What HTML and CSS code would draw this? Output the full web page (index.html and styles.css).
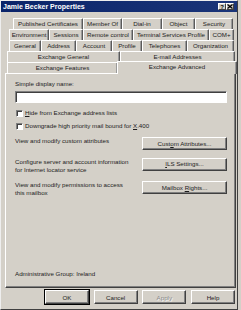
FILE: index.html
```html
<!DOCTYPE html>
<html lang="en">
<head>
    <meta charset="UTF-8">
    <meta name="viewport" content="width=device-width, initial-scale=1.0">
    <title>Jamie Becker Properties</title>
    <link rel="stylesheet" href="styles.css">
</head>
<body>

<div class="window">
    <div class="titlebar">
        <span class="title">Jamie Becker Properties</span>
        <div class="caption-buttons">
            <span class="cbtn">?</span>
            <span class="cbtn">
                <svg width="6" height="5" viewBox="0 0 6 5"><path d="M0.5 0.5 L5.5 4.5 M5.5 0.5 L0.5 4.5" stroke="#000" stroke-width="1.3"/></svg>
            </span>
        </div>
    </div>

    <div class="client">
        <!-- tab rows, top row first -->
        <div class="tabs">
            <div class="tab-row row1">
                <div class="tab">Published Certificates</div>
                <div class="tab">Member Of</div>
                <div class="tab">Dial-in</div>
                <div class="tab">Object</div>
                <div class="tab">Security</div>
            </div>
            <div class="tab-row row2">
                <div class="tab">Environment</div>
                <div class="tab">Sessions</div>
                <div class="tab">Remote control</div>
                <div class="tab">Terminal Services Profile</div>
                <div class="tab">COM+</div>
            </div>
            <div class="tab-row row3">
                <div class="tab">General</div>
                <div class="tab">Address</div>
                <div class="tab">Account</div>
                <div class="tab">Profile</div>
                <div class="tab">Telephones</div>
                <div class="tab">Organization</div>
            </div>
            <div class="tab-row row4">
                <div class="tab">Exchange General</div>
                <div class="tab">E-mail Addresses</div>
            </div>
            <div class="tab-row row5">
                <div class="tab">Exchange Features</div>
                <div class="tab selected">Exchange Advanced</div>
            </div>
        </div>

        <div class="page">
            <div class="field-label">Simple display name:</div>
            <div class="textbox"></div>

            <div class="check first"><span class="box"></span><span><u>H</u>ide from Exchange address lists</span></div>
            <div class="check"><span class="box"></span><span>Downgrade high priority mail bound for <u>X</u>.400</span></div>

            <div class="actions">
                <div class="action">
                    <p>View and modify custom attributes</p>
                    <div class="btn wide"><span>Cust<u>o</u>m Attributes...</span></div>
                </div>
                <div class="action">
                    <p>Configure server and account information for Internet locator service</p>
                    <div class="btn wide"><span><u>I</u>LS Settings...</span></div>
                </div>
                <div class="action">
                    <p>View and modify permissions to access this mailbox</p>
                    <div class="btn wide"><span>Mailbox <u>R</u>ights...</span></div>
                </div>
            </div>

            <div class="admin-group">Administrative Group: Ireland</div>
        </div>

        <div class="dialog-buttons">
            <div class="btn default">OK</div>
            <div class="btn">Cancel</div>
            <div class="btn disabled">Apply</div>
            <div class="btn">Help</div>
        </div>
    </div>
</div>

</body>
</html>
```

FILE: styles.css
```css
body {
    margin: 0;
    font-family: "Liberation Sans", Arial, sans-serif;
    font-size: 6.2px;
    color: #1c1c1c;
    background-color: #d4d0c8;
}
.window {
    width: 238px;
    height: 310px;
    box-sizing: border-box;
    border: 1px solid;
    border-color: #eeeeee #404040 #404040 #eeeeee;
    background-color: #d4d0c8;
}
.titlebar {
    height: 11px;
    display: flex;
    align-items: center;
    justify-content: space-between;
    padding: 0 3px 0 2px;
    background: linear-gradient(90deg, #0a246a, #1b3578);
    color: white;
    font-size: 7px;
    font-weight: bold;
}
.caption-buttons {
    display: flex;
}
.cbtn {
    width: 8px;
    height: 7px;
    box-sizing: border-box;
    display: flex;
    align-items: center;
    justify-content: center;
    background-color: #d4d0c8;
    border: 1px solid;
    border-color: #fff #404040 #404040 #fff;
    color: #000;
    font-size: 6px;
    line-height: 6px;
}
.client {
    padding: 6px 1px 0 4px;
}
.tab-row {
    display: grid;
    height: 11px;
}
.row1 { grid-template-columns: 70px 39px 40px 33px 1fr; margin: 0 3px 0 8px; }
.row2 { grid-template-columns: 40px 34px 50px 76px 1fr; margin: 0 2px 0 4px; }
.row3 { grid-template-columns: 32px 35px 36px 30px 45px 1fr; margin: 0 2px 0 4px; }
.row4 { grid-template-columns: 113px 1fr; margin: 0 1px 0 2px; }
.row5 { grid-template-columns: 111px 1fr; margin: 0 1px 0 2px; }
.tab {
    border-top: 1px solid #fff;
    border-left: 1px solid #fff;
    border-right: 1px solid #5a5a5a;
    box-shadow: inset -1px 0 #9a9a9a;
    border-radius: 1px 1px 0 0;
    text-align: center;
    line-height: 10px;
    white-space: nowrap;
    overflow: hidden;
}
.tab.selected {
    position: relative;
    z-index: 1;
    margin: -1px -2px -1px -1px;
    line-height: 10px;
    background-color: #d4d0c8;
}
.page {
    height: 215px;
    box-sizing: border-box;
    display: flex;
    flex-direction: column;
    padding: 6px 8px 9px 9px;
    border: 1px solid;
    border-color: #fff #404040 #404040 #fff;
    box-shadow: inset -1px -1px #808080;
    line-height: 8px;
}
.textbox {
    height: 12px;
    margin-top: 3px;
    box-sizing: border-box;
    background-color: white;
    border: 1px solid;
    border-color: #808080 #fff #fff #808080;
    box-shadow: inset 1px 1px #404040;
}
.check {
    display: flex;
    align-items: center;
    gap: 2px;
    height: 8px;
    margin-top: 5px;
}
.check.first {
    margin-top: 6px;
}
.box {
    width: 7px;
    height: 7px;
    margin-left: 1px;
    box-sizing: border-box;
    background-color: white;
    border: 1px solid;
    border-color: #808080 #fff #fff #808080;
    box-shadow: inset 1px 1px #404040;
}
.actions {
    display: flex;
    flex-direction: column;
    gap: 7.5px;
    margin-top: 7px;
}
.action {
    display: flex;
    justify-content: space-between;
    align-items: flex-start;
}
.action p {
    margin: 0;
    width: 117px;
}
.btn {
    width: 44px;
    height: 14px;
    box-sizing: border-box;
    display: flex;
    align-items: center;
    justify-content: center;
    background-color: #d4d0c8;
    border: 1px solid;
    border-color: #fff #404040 #404040 #fff;
    box-shadow: inset -1px -1px #808080;
    white-space: nowrap;
}
.btn.wide {
    width: 85px;
    height: 13px;
}
.btn.default {
    outline: 1px solid #000;
}
.btn.disabled {
    color: #8a8a8a;
    text-shadow: 1px 1px #f4f4f4;
}
.admin-group {
    margin-top: auto;
}
.dialog-buttons {
    display: flex;
    justify-content: flex-end;
    gap: 4.7px;
    margin-top: 2px;
    padding-right: 1px;
}
```
